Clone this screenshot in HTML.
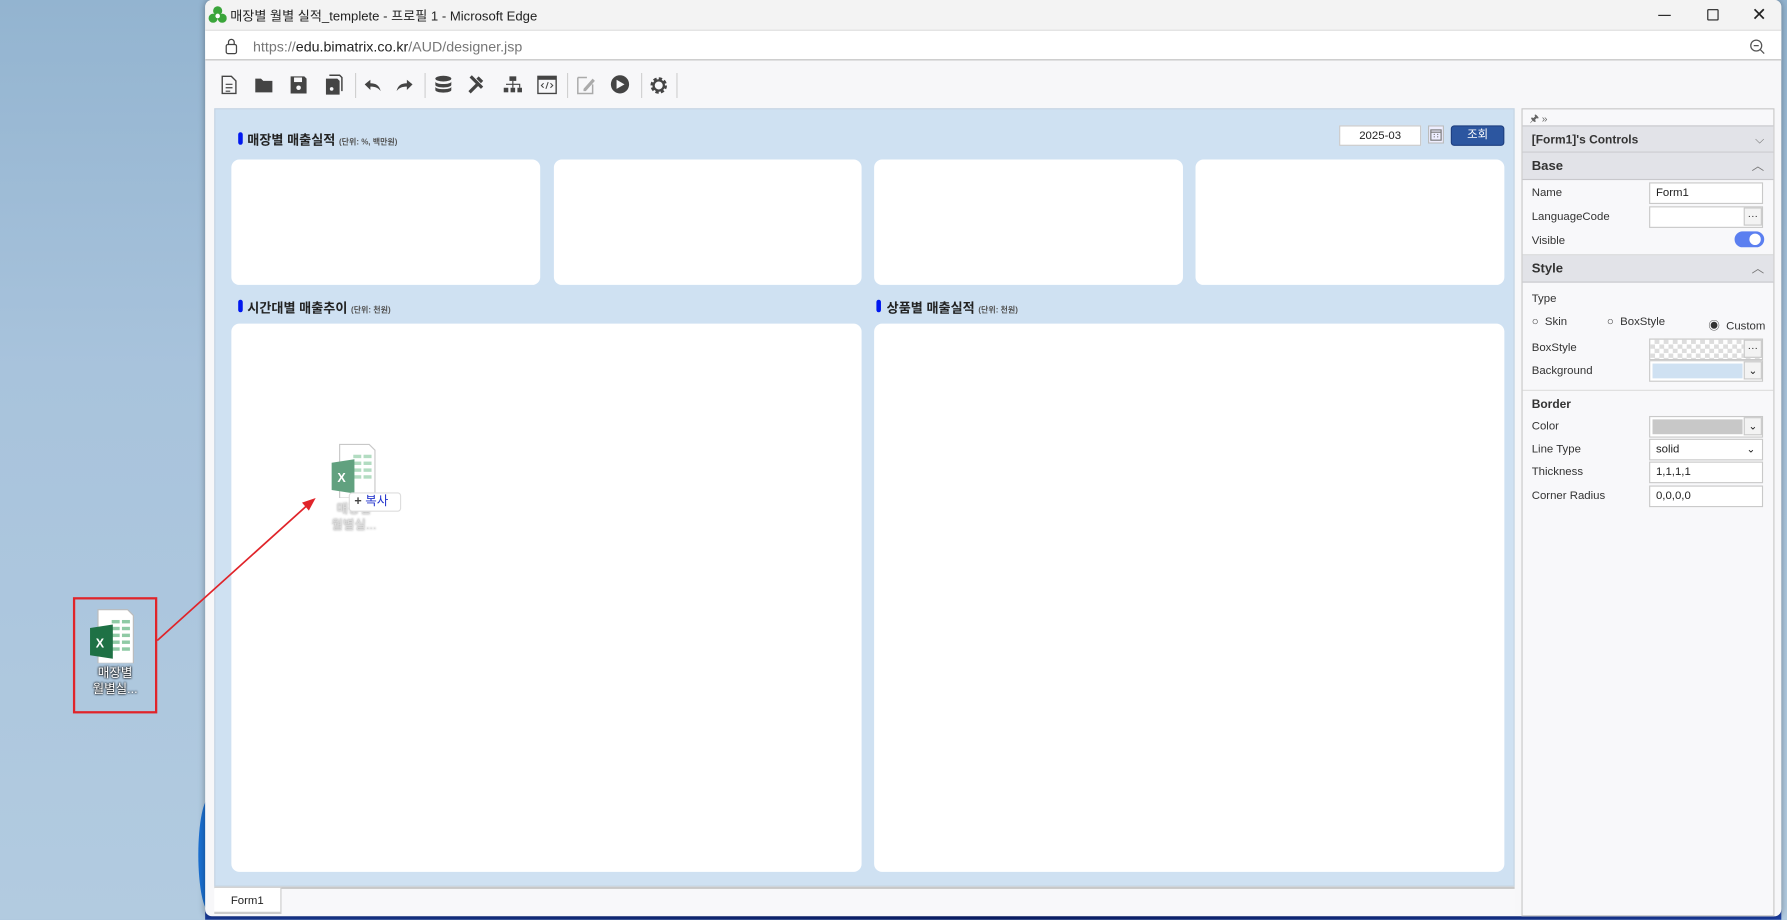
<!DOCTYPE html>
<html><head><meta charset="utf-8"><style>
*{box-sizing:border-box;margin:0;padding:0}
html,body{width:1787px;height:920px;overflow:hidden;background:#a9c4dc}
#s{position:absolute;left:0;top:0;width:1568px;height:807px;transform:scale(1.13967);transform-origin:0 0;font-family:"Liberation Sans","Noto Sans CJK KR",sans-serif;color:#222}
.a{position:absolute}
.desk{left:0;top:0;width:1568px;height:807px;background:linear-gradient(180deg,#93b4d0 0%,#a8c3dc 40%,#b2cbe0 100%)}
.win{left:180px;top:0;width:1383px;height:804px;background:#f7f7f9;border-radius:6px;overflow:hidden;box-shadow:0 0 6px rgba(0,0,0,.35)}
.tb{left:0;top:0;width:100%;height:44px;background:#f3f3f3}
.ab{left:0;top:26px;width:100%;height:27px;background:#fff;border-top:1px solid #ddd;border-bottom:1px solid #bdbdbd}
.card{background:#fff;border-radius:7px}
.ttl{font-size:11.5px;font-weight:bold;color:#222}
.ttl small{font-size:7px;color:#555;font-weight:bold}
.bar{width:4px;height:11px;background:#0018f0;border-radius:2px}
.lbl{font-size:10px;color:#333}
.fld{background:#fff;border:1px solid #c9c9c9;height:19px;font-size:10px;line-height:17px;padding-left:5px}
.hdr{background:#e2e3e8;border-bottom:1px solid #c8c8cc;font-size:11.5px;font-weight:bold;color:#333;padding-left:8px}
.btnd{background:#f3f3f3;border:1px solid #c9c9c9;width:16px;height:16px;font-size:9px;text-align:center;line-height:12px}
</style></head><body><div id="s">
<div class="a desk"></div>
<div class="a" style="left:174px;top:700px;width:20px;height:100px;border-radius:50%;background:#1a6fd0"></div>
<div class="a" style="left:180px;top:798px;width:1383px;height:9px;background:linear-gradient(90deg,#1a3c9a,#0b1f6e,#1b3fa6)"></div>
<div class="a win">
 <div class="a tb"></div>
 <svg class="a" style="left:3px;top:5px" width="16" height="16" viewBox="0 0 16 16"><circle cx="8" cy="4.5" r="4" fill="#3aa53a"/><circle cx="4" cy="11" r="4" fill="#3aa53a"/><circle cx="12" cy="11" r="4" fill="#3aa53a"/><circle cx="8" cy="9" r="2" fill="#fff"/></svg>
 <div class="a" style="left:22px;top:6px;font-size:11.5px;color:#222">매장별 월별 실적_templete - 프로필 1 - Microsoft Edge</div>
 <div class="a" style="left:1275px;top:13px;width:11px;height:1px;background:#222"></div>
 <div class="a" style="left:1318px;top:8px;width:10px;height:10px;border:1.3px solid #222;border-radius:1px"></div>
 <div class="a" style="left:1357px;top:3px;font-size:16px;color:#222">✕</div>
 <div class="a ab"></div>
 <svg class="a" style="left:17px;top:33px" width="12" height="15" viewBox="0 0 12 15"><rect x="1.5" y="6" width="9" height="8" rx="1.5" fill="none" stroke="#444" stroke-width="1.1"/><path d="M3.5 6V4a2.5 2.5 0 0 1 5 0v2" fill="none" stroke="#444" stroke-width="1.1"/></svg>
 <div class="a" style="left:42px;top:34px;font-size:12.5px;color:#777">https://<span style="color:#222">edu.bimatrix.co.kr</span>/AUD/designer.jsp</div>
 <svg class="a" style="left:1355px;top:34px" width="14" height="14" viewBox="0 0 14 14"><circle cx="6" cy="6" r="4.8" fill="none" stroke="#555" stroke-width="1.1"/><path d="M3.8 6h4.4M9.5 9.5l3.5 3.5" stroke="#555" stroke-width="1.1"/></svg>
 <svg class="a" style="left:0;top:62px" width="430" height="26" viewBox="180 62 430 26">
  <g fill="#444">
   <path d="M195 67h8l4 4v11h-12z" fill="none" stroke="#444" stroke-width="1.2"/><path d="M198 74h6M198 77h6M198 80h4" stroke="#444"/>
   <path d="M224 69h5l2 2h8v10h-15z"/>
   <path d="M255 67h12l2 2v13h-14z"/><rect x="258" y="68" width="7" height="4" fill="#f7f7f9"/><circle cx="262" cy="77" r="2" fill="#f7f7f9"/>
   <path d="M286 69h10l2 2v12h-12z"/><path d="M289 66h9l2 2v12" fill="none" stroke="#444" stroke-width="1.3"/><circle cx="291" cy="78" r="1.6" fill="#f7f7f9"/>
   <path d="M320 74l5-4v3c5 0 8 2 9 7-2-3-5-4-9-4v3z"/>
   <path d="M362 74l-5-4v3c-5 0-8 2-9 7 2-3 5-4 9-4v3z"/>
   <ellipse cx="389" cy="69" rx="7" ry="2.5"/><path d="M382 71.5c0 3 14 3 14 0v3c0 3-14 3-14 0zM382 76c0 3 14 3 14 0v3c0 3-14 3-14 0z"/>
   <path d="M411 80l8-8 2 2-8 8zM420 67l4 4-2 2-4-4zM412 68l2-2 10 10-2 2z"/>
   <rect x="447" y="67" width="6" height="4"/><rect x="442" y="77" width="4" height="4"/><rect x="448" y="77" width="4" height="4"/><rect x="454" y="77" width="4" height="4"/><path d="M450 71v3M444 74h12v3M450 74v3" fill="none" stroke="#444"/>
   <rect x="472" y="67" width="16" height="15" fill="none" stroke="#444" stroke-width="1.2"/><rect x="472" y="67" width="16" height="3"/><path d="M477 73l-2 2 2 2M483 73l2 2-2 2M481 72l-2 6" fill="none" stroke="#444" stroke-width=".9"/>
   <path d="M507 68h8M507 68v14h13v-8" fill="none" stroke="#aaa" stroke-width="1.3"/><path d="M512 78l8-9 2 2-8 9h-2z" fill="#aaa"/>
   <circle cx="544" cy="74" r="8"/><path d="M541 70l7 4-7 4z" fill="#f7f7f9"/>
   <circle cx="578" cy="75" r="5.5" fill="none" stroke="#444" stroke-width="3.5" stroke-dasharray="2.6 1.7"/><circle cx="578" cy="75" r="4.5" fill="none" stroke="#444" stroke-width="2"/>
  </g>
  <g stroke="#d0d0d0"><path d="M312 64v22M373 64v22M498 64v22M563 64v22M594 64v22"/></g>
 </svg>
</div>
<div class="a" style="left:188px;top:95px;width:1141px;height:683px;background:#cfe1f2;border:1px solid #c6d4e2"></div>
<div class="a bar" style="left:209px;top:116px"></div>
<div class="a ttl" style="left:217px;top:115px">매장별 매출실적 <small>(단위: %, 백만원)</small></div>
<div class="a fld" style="left:1175px;top:110px;width:72px;height:18px;text-align:center;padding:0">2025-03</div>
<svg class="a" style="left:1253px;top:110px" width="14" height="16" viewBox="0 0 14 16"><rect x="0.5" y="0.5" width="13" height="15" fill="#eef" stroke="#bbb"/><rect x="2.5" y="4" width="9" height="9" fill="none" stroke="#777"/><path d="M2.5 6h9M5 8h1M8 8h1M5 10h1M8 10h1" stroke="#777"/></svg>
<div class="a" style="left:1273px;top:110px;width:47px;height:18px;background:#2c56a0;border:1px solid #1e3f80;border-radius:3px;color:#fff;font-size:10px;text-align:center;line-height:16px">조회</div>
<div class="a card" style="left:203px;top:140px;width:271px;height:110px"></div>
<div class="a card" style="left:486px;top:140px;width:270px;height:110px"></div>
<div class="a card" style="left:767px;top:140px;width:271px;height:110px"></div>
<div class="a card" style="left:1049px;top:140px;width:271px;height:110px"></div>
<div class="a bar" style="left:209px;top:263px"></div>
<div class="a ttl" style="left:217px;top:262px">시간대별 매출추이 <small>(단위: 천원)</small></div>
<div class="a bar" style="left:769px;top:263px"></div>
<div class="a ttl" style="left:778px;top:262px">상품별 매출실적 <small>(단위: 천원)</small></div>
<div class="a card" style="left:203px;top:284px;width:553px;height:481px"></div>
<div class="a card" style="left:767px;top:284px;width:553px;height:481px"></div>
<div class="a" style="left:188px;top:778px;width:1141px;height:25px;background:#f8f8fa;border-top:2px solid #c8c8c8"></div>
<div class="a" style="left:188px;top:779px;width:59px;height:23px;background:#fff;border-right:1px solid #ccc;border-bottom:2px solid #ccc;font-size:10px;text-align:center;line-height:23px">Form1</div>
<div class="a" style="left:1335px;top:95px;width:222px;height:709px;background:#f8f8fa;border:1px solid #c8c8c8"></div>
<div class="a" style="left:1342px;top:97px;font-size:9px;color:#666">🖈 »</div>
<div class="a hdr" style="left:1336px;top:110px;width:220px;height:24px;line-height:25px;font-size:10.5px;border-top:1px solid #c8c8cc">[Form1]'s Controls<span style="position:absolute;right:8px;color:#777;font-weight:normal">⌵</span></div>
<div class="a hdr" style="left:1336px;top:134px;width:220px;height:24px;line-height:24px">Base<span style="position:absolute;right:8px;color:#777;font-weight:normal;font-size:11px">︿</span></div>
<div class="a lbl" style="left:1344px;top:164px">Name</div>
<div class="a fld" style="left:1447px;top:160px;width:100px">Form1</div>
<div class="a lbl" style="left:1344px;top:185px">LanguageCode</div>
<div class="a fld" style="left:1447px;top:181px;width:100px"></div>
<div class="a btnd" style="left:1530px;top:182px">···</div>
<div class="a lbl" style="left:1344px;top:206px">Visible</div>
<div class="a" style="left:1522px;top:203px;width:26px;height:14px;border-radius:7px;background:#5b7ff0"></div>
<div class="a" style="left:1535px;top:205px;width:10px;height:10px;border-radius:5px;background:#fff"></div>
<div class="a hdr" style="left:1336px;top:223px;width:220px;height:25px;line-height:25px;border-top:1px solid #ddd">Style<span style="position:absolute;right:8px;color:#777;font-weight:normal;font-size:11px">︿</span></div>
<div class="a lbl" style="left:1344px;top:257px">Type</div>
<div class="a lbl" style="left:1344px;top:277px">○ &nbsp;Skin</div>
<div class="a lbl" style="left:1410px;top:277px">○ &nbsp;BoxStyle</div>
<div class="a lbl" style="left:1499px;top:277px">◉ &nbsp;Custom</div>
<div class="a lbl" style="left:1344px;top:300px">BoxStyle</div>
<div class="a fld" style="left:1447px;top:297px;width:100px;background:repeating-conic-gradient(#ddd 0 25%,#fff 0 50%) 0 0/8px 8px"></div>
<div class="a btnd" style="left:1530px;top:298px">···</div>
<div class="a lbl" style="left:1344px;top:320px">Background</div>
<div class="a fld" style="left:1447px;top:316px;width:100px;padding:2px"><div style="width:79px;height:13px;background:#cfe1f2"></div></div>
<div class="a btnd" style="left:1530px;top:317px;line-height:14px">⌄</div>
<div class="a" style="left:1336px;top:342px;width:220px;height:1px;background:#ddd"></div>
<div class="a lbl" style="left:1344px;top:349px;font-weight:bold;font-size:10.5px">Border</div>
<div class="a lbl" style="left:1344px;top:369px">Color</div>
<div class="a fld" style="left:1447px;top:365px;width:100px;padding:2px"><div style="width:79px;height:13px;background:#c8c8c8"></div></div>
<div class="a btnd" style="left:1530px;top:366px;line-height:14px">⌄</div>
<div class="a lbl" style="left:1344px;top:389px">Line Type</div>
<div class="a fld" style="left:1447px;top:385px;width:100px">solid<span style="position:absolute;right:6px;font-size:9px">⌄</span></div>
<div class="a lbl" style="left:1344px;top:409px">Thickness</div>
<div class="a fld" style="left:1447px;top:405px;width:100px">1,1,1,1</div>
<div class="a lbl" style="left:1344px;top:430px">Corner Radius</div>
<div class="a fld" style="left:1447px;top:426px;width:100px">0,0,0,0</div>
<div class="a" style="left:64px;top:524px;width:74px;height:102px;border:2px solid #e0242a"></div>
<svg class="a" style="left:78px;top:534px" width="42" height="48" viewBox="0 0 42 48"><path d="M8 1h26l5 5v42H8z" fill="#fff" stroke="#bbb"/><g fill="#8fcaa5"><rect x="20" y="10" width="7" height="3"/><rect x="29" y="10" width="7" height="3"/><rect x="20" y="16" width="7" height="3"/><rect x="29" y="16" width="7" height="3"/><rect x="20" y="22" width="7" height="3"/><rect x="29" y="22" width="7" height="3"/><rect x="20" y="28" width="7" height="3"/><rect x="29" y="28" width="7" height="3"/><rect x="20" y="34" width="7" height="3"/><rect x="29" y="34" width="7" height="3"/></g><path d="M1 17l20-3v30L1 41z" fill="#1e7145"/><text x="6" y="34" font-size="11" font-weight="bold" fill="#fff" font-family="Liberation Sans">X</text></svg>
<div class="a" style="left:66px;top:584px;width:70px;text-align:center;font-size:11px;line-height:14px;color:#fff;text-shadow:0 0 2px #000,0 0 2px #000">매장별<br>월별실...</div>
<svg class="a" style="left:290px;top:389px;opacity:.8" width="42" height="48" viewBox="0 0 42 48"><path d="M8 1h26l5 5v42H8z" fill="#fff" stroke="#bbb"/><g fill="#9fd4b2"><rect x="20" y="10" width="7" height="3"/><rect x="29" y="10" width="7" height="3"/><rect x="20" y="16" width="7" height="3"/><rect x="29" y="16" width="7" height="3"/><rect x="20" y="22" width="7" height="3"/><rect x="29" y="22" width="7" height="3"/><rect x="20" y="28" width="7" height="3"/><rect x="29" y="28" width="7" height="3"/></g><path d="M1 17l20-3v30L1 41z" fill="#3a8a60"/><text x="6" y="34" font-size="11" font-weight="bold" fill="#fff" font-family="Liberation Sans">X</text></svg>
<div class="a" style="left:283px;top:440px;width:55px;text-align:center;font-size:11px;line-height:14px;color:#ddd;text-shadow:0 0 2px #888">매장별<br>월별실...</div>
<div class="a" style="left:306px;top:432px;width:46px;height:17px;background:#fff;border:1px solid #ddd;border-radius:3px;font-size:11px;line-height:15px;padding-left:4px"><b style="color:#444">+</b> <span style="color:#2233cc">복사</span></div>
<svg class="a" style="left:0;top:0" width="1568" height="807"><path d="M138 562L270 443" stroke="#e0242a" stroke-width="1.5"/><path d="M277 437l-12 4 6 7z" fill="#e0242a"/></svg>
</div></body></html>
